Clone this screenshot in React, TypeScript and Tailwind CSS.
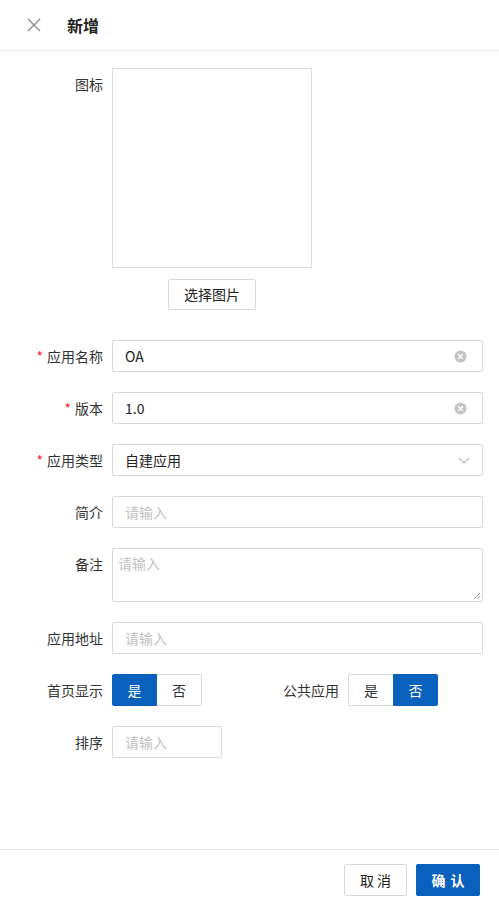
import { ReactNode } from "react";

const FONT = { fontFamily: '"Noto Sans CJK SC", "Noto Sans", sans-serif' };

function ClearIcon() {
  return (
    <svg width="13" height="13" viewBox="0 0 14 14" className="shrink-0">
      <circle cx="7" cy="7" r="6.5" fill="#c4c4c4" />
      <path d="M4.8 4.8 9.2 9.2M9.2 4.8 4.8 9.2" stroke="#fff" strokeWidth="1.3" strokeLinecap="round" />
    </svg>
  );
}

function Chevron() {
  return (
    <svg width="12" height="7" viewBox="0 0 12 7" className="shrink-0">
      <path d="M0.8 0.8 6 6 11.2 0.8" fill="none" stroke="#b8b8b8" strokeWidth="1.1" />
    </svg>
  );
}

function Row({ label, required, children, labelWidth = "w-[112px]" }: { label: string; required?: boolean; children: ReactNode; labelWidth?: string }) {
  return (
    <div className="flex items-start">
      <div className={`${labelWidth} shrink-0 pr-[9px] h-8 flex items-center justify-end text-[14px] text-[#333]`}>
        {required && <span className="text-[#f5222d] mr-[4px] text-[14px]">*</span>}
        {label}
      </div>
      {children}
    </div>
  );
}

function Field({ value, placeholder, clear, select, className = "flex-1" }: { value?: string; placeholder?: string; clear?: boolean; select?: boolean; className?: string }) {
  return (
    <div className={`${className} h-8 border border-[#d9d9d9] rounded-[2px] bg-white flex items-center px-[12px]`}>
      <span className={`flex-1 text-[14px] ${value ? "text-[#222]" : "text-[#bfbfbf]"}`}>{value || placeholder}</span>
      {clear && <span className="mr-[3px]"><ClearIcon /></span>}
      {select && <Chevron />}
    </div>
  );
}

function Toggle({ yes }: { yes: boolean }) {
  const on = "bg-[#0a60bd] border-[#0a60bd] text-white";
  const off = "bg-white border-[#d9d9d9] text-[#333]";
  return (
    <div className="flex h-8 text-[14px]">
      <div className={`w-[45px] flex items-center justify-center border rounded-l-[2px] ${yes ? on : off} ${yes ? "" : "border-r-0"}`}>是</div>
      <div className={`w-[45px] flex items-center justify-center border rounded-r-[2px] ${yes ? off : on} ${yes ? "border-l-0" : ""}`}>否</div>
    </div>
  );
}

export default function App() {
  return (
    <div className="w-[499px] h-[904px] bg-white flex flex-col" style={FONT}>
      <div className="h-[51px] shrink-0 border-b border-[#ebebeb] flex items-center">
        <svg width="14" height="14" viewBox="0 0 14 14" className="ml-[27px]">
          <path d="M1 1 13 13M13 1 1 13" stroke="#8a8a8a" strokeWidth="1.4" />
        </svg>
        <span className="ml-[26px] text-[16px] font-bold text-[#222]">新增</span>
      </div>

      <div className="flex-1 pt-[17px] pr-[16px] flex flex-col">
        <Row label="图标">
          <div className="flex flex-col items-center">
            <div className="w-[200px] h-[200px] border border-[#dcdcdc]" />
            <button className="mt-[11px] w-[88px] h-[31px] border border-[#d9d9d9] rounded-[2px] bg-white text-[14px] text-[#222]">
              选择图片
            </button>
          </div>
        </Row>

        <div className="mt-[30px] flex flex-col gap-[20px]">
          <Row label="应用名称" required>
            <Field value="OA" clear />
          </Row>
          <Row label="版本" required>
            <Field value="1.0" clear />
          </Row>
          <Row label="应用类型" required>
            <Field value="自建应用" select />
          </Row>
          <Row label="简介">
            <Field placeholder="请输入" />
          </Row>
          <Row label="备注">
            <div className="flex-1 h-[54px] border border-[#d9d9d9] rounded-[2px] relative px-[5px] pt-[4px] text-[14px] text-[#bfbfbf]">
              请输入
              <svg width="8" height="8" viewBox="0 0 8 8" className="absolute right-[1px] bottom-[1px]">
                <path d="M1 7 7 1M4.5 7 7 4.5" stroke="#888" strokeWidth="0.9" />
              </svg>
            </div>
          </Row>
          <Row label="应用地址">
            <Field placeholder="请输入" />
          </Row>
          <div className="flex">
            <div className="w-[250px]">
              <Row label="首页显示">
                <Toggle yes />
              </Row>
            </div>
            <Row label="公共应用" labelWidth="w-[98px]">
              <Toggle yes={false} />
            </Row>
          </div>
          <Row label="排序">
            <Field placeholder="请输入" className="w-[110px]" />
          </Row>
        </div>
      </div>

      <div className="h-[55px] shrink-0 border-t border-[#e5e5e5] flex justify-end items-start pt-[14px] pr-[19px] gap-[9px]">
        <button className="w-[63px] h-[32px] border border-[#d9d9d9] rounded-[2px] bg-white text-[14px] text-[#222] tracking-[3px] pl-[3px]">
          取消
        </button>
        <button className="w-[64px] h-[32px] rounded-[2px] bg-[#0a60bd] text-white text-[14px] font-bold tracking-[5px] pl-[5px]">
          确认
        </button>
      </div>
    </div>
  );
}
